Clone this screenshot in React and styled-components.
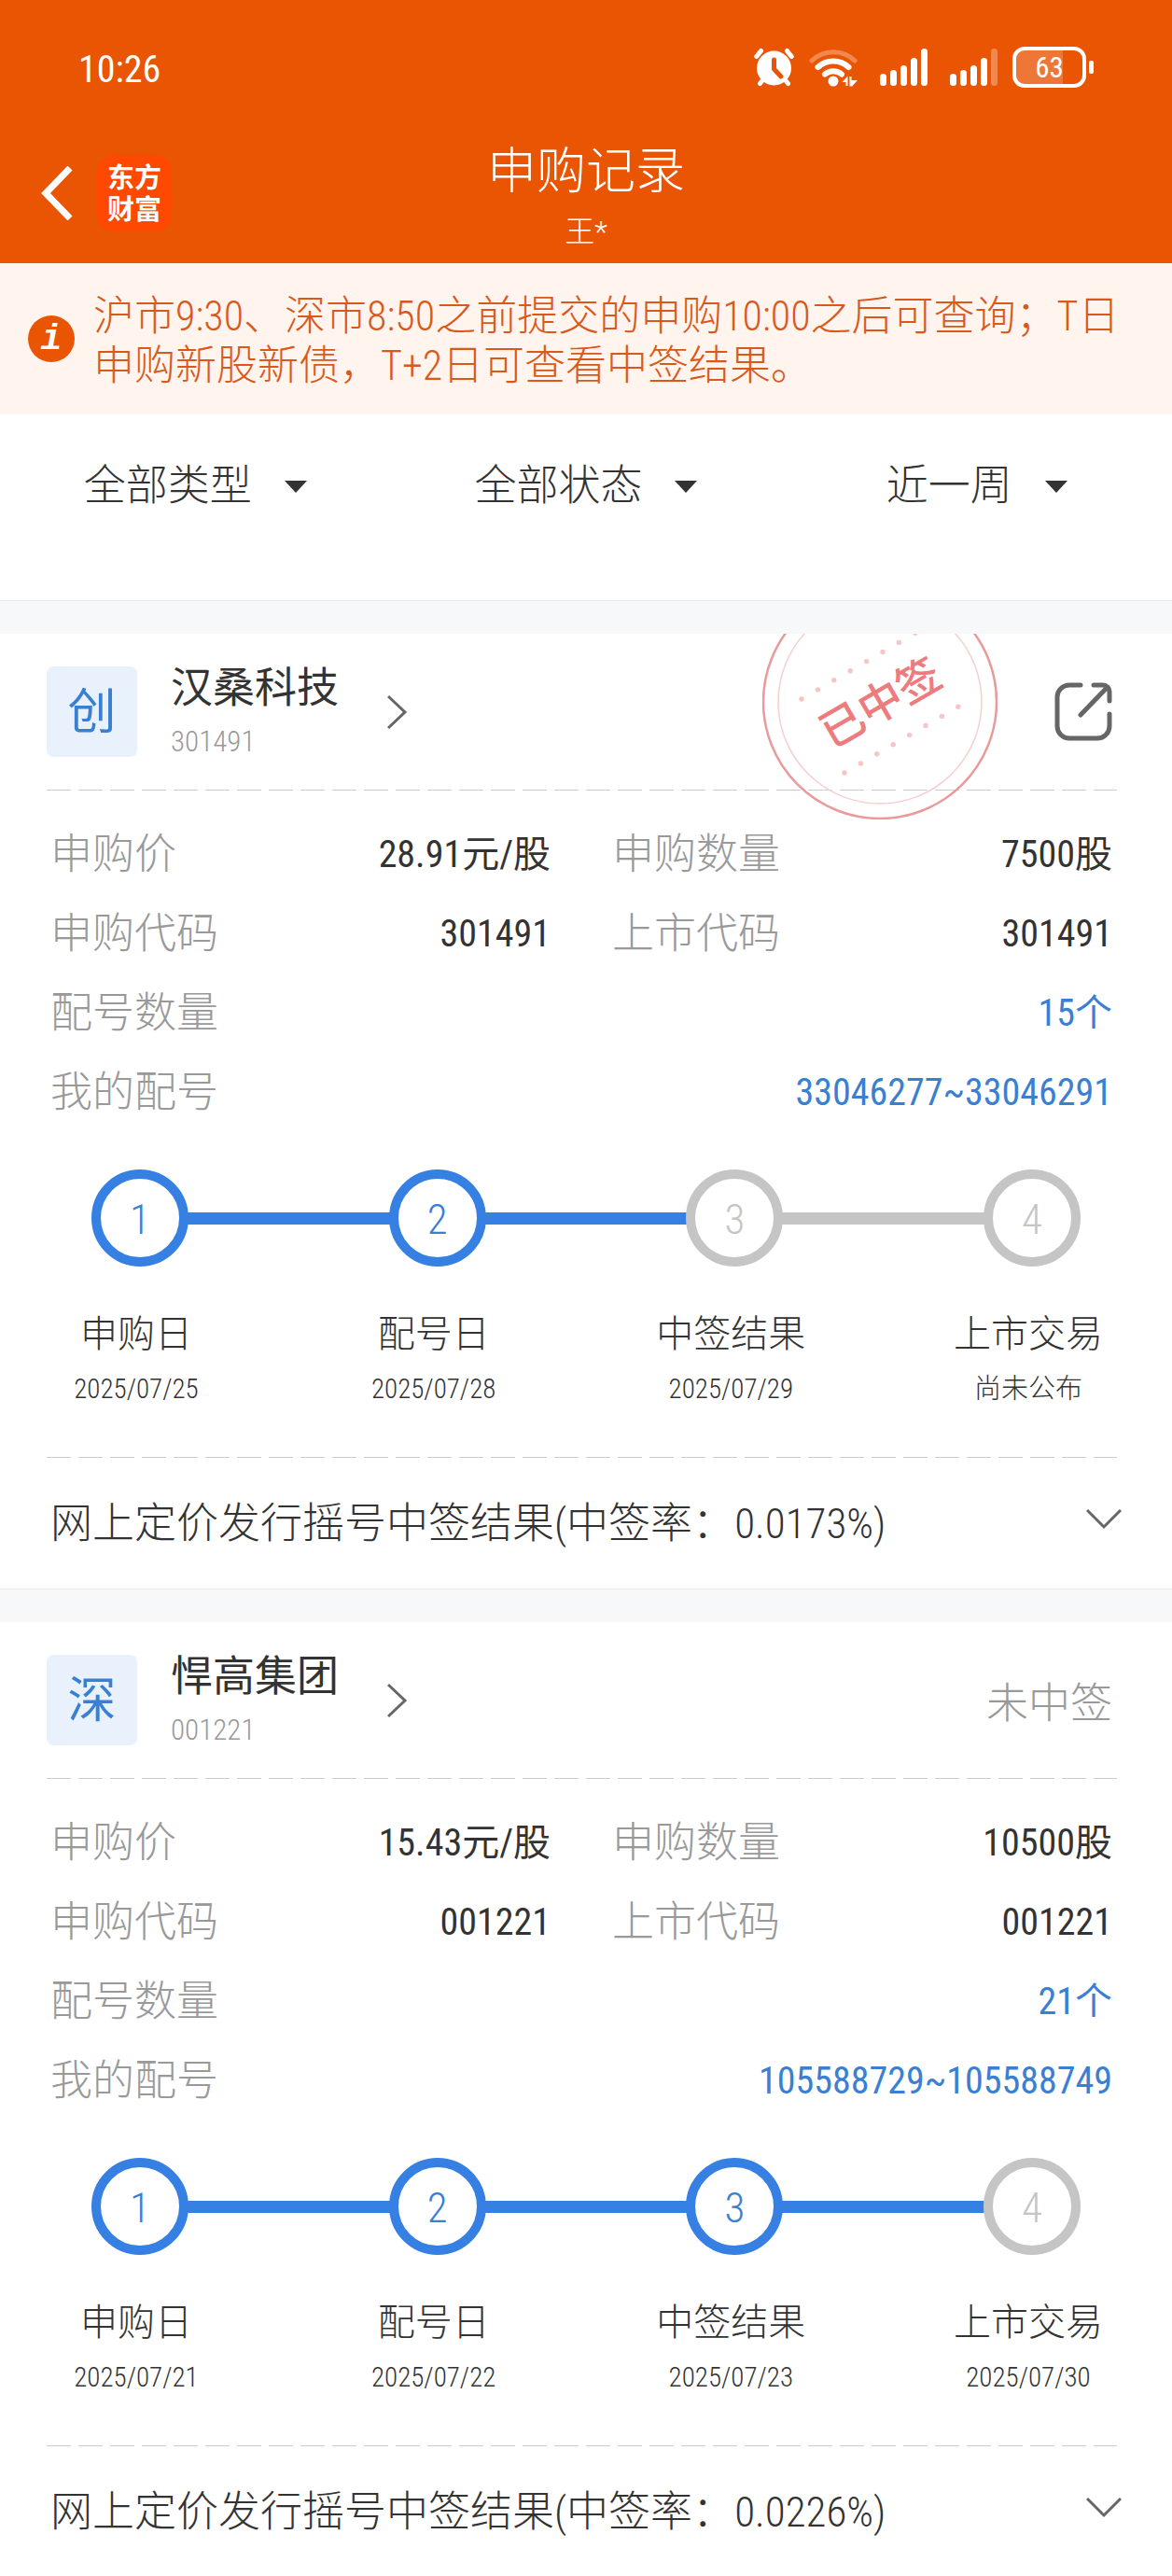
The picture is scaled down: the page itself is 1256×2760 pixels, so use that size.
import React from "react";
import styled, { createGlobalStyle, css } from "styled-components";

const FILTERS = [
  { name: "类型", options: ["全部类型", "新股申购", "新债申购"] },
  { name: "状态", options: ["全部状态", "已经中签", "没有中签"] },
  { name: "时间", options: ["近一周", "近一月", "近三月"] },
];

const RECORDS = [
  {
    market: "创",
    name: "汉桑科技",
    code: "301491",
    won: true,
    price: "28.91元/股",
    amount: "7500股",
    count: "15个",
    numbers: "33046277~33046291",
    done: 2,
    steps: [
      ["申购日", "2025/07/25"],
      ["配号日", "2025/07/28"],
      ["中签结果", "2025/07/29"],
      ["上市交易", "尚未公布"],
    ],
    rate: "0.0173%",
  },
  {
    market: "深",
    name: "悍高集团",
    code: "001221",
    won: false,
    price: "15.43元/股",
    amount: "10500股",
    count: "21个",
    numbers: "105588729~105588749",
    done: 3,
    steps: [
      ["申购日", "2025/07/21"],
      ["配号日", "2025/07/22"],
      ["中签结果", "2025/07/23"],
      ["上市交易", "2025/07/30"],
    ],
    rate: "0.0226%",
  },
];

const AlarmIcon = () => (
  <svg width="43" height="42" viewBox="0 0 43 42" fill="none" strokeLinecap="round">
    <circle cx="21.5" cy="22" r="18.5" fill="#fff" />
    <path d="M2.8 9.5L7.5 3.5M40.2 9.5L35.5 3.5M10 34L6.5 38.5M33 34L36.5 38.5" stroke="#fff" strokeWidth="5" />
    <path d="M21.5 13V23L29 31" stroke="#ea5504" strokeWidth="5" strokeLinejoin="round" />
  </svg>
);

const WifiIcon = () => (
  <svg width="52" height="42" viewBox="0 0 52 42" fill="none" stroke="#fff" strokeLinecap="round">
    <path d="M3 14A33 33 0 0 1 49 14" strokeWidth="5" opacity="0.3" />
    <path d="M9.5 21A24 24 0 0 1 42.5 21" strokeWidth="6" />
    <path d="M17 28.5A14 14 0 0 1 35 28.5" strokeWidth="6" />
    <circle cx="26" cy="36" r="5.5" fill="#fff" stroke="none" />
    <path d="M35.5 37L41.5 30.5V41H39.5V37ZM43.5 31H45.5V35H52L46 41.5H43.5Z" fill="#fff" stroke="none" />
  </svg>
);

const SignalIcon = ({ level }) => (
  <svg width="59" height="42" viewBox="-8 0 59 42" fill="#fff">
    {[28, 24, 19, 11, 1].map((top, idx) => (
      <rect
        key={top}
        x={idx * 11}
        y={top}
        width="7"
        height={41 - top}
        rx="3.5"
        opacity={idx < level ? 1 : 0.3}
      />
    ))}
  </svg>
);

const BackIcon = () => (
  <svg width="34" height="58" viewBox="0 0 34 58" fill="none" stroke="#fff" strokeWidth="7">
    <path d="M31 2L5 29L31 56" />
  </svg>
);

const RightIcon = () => (
  <svg width="22" height="38" viewBox="0 0 22 38" fill="none" stroke="#666" strokeWidth="3">
    <path d="M1 2L19 19L1 36" />
  </svg>
);

const DownIcon = () => (
  <svg width="38" height="22" viewBox="0 0 38 22" fill="none" stroke="#666" strokeWidth="3">
    <path d="M1 1L19 19L37 1" />
  </svg>
);

const ShareIcon = () => (
  <svg width="62" height="63" viewBox="0 0 62 63" fill="none" stroke="#666" strokeWidth="5" strokeLinecap="round">
    <path d="M28 3H16A13 13 0 0 0 3 16V47A13 13 0 0 0 16 60H46A13 13 0 0 0 59 47V34" />
    <path d="M42 3H52A7 7 0 0 1 59 10V20M56 6L28 35" />
  </svg>
);

const Stamp = () => (
  <StampSvg width="252" height="252" viewBox="0 0 252 252">
    <circle cx="126" cy="126" r="125" fill="none" stroke="#e99a9c" strokeWidth="2.5" />
    <circle cx="126" cy="126" r="109" fill="none" stroke="#f6d0d0" strokeWidth="1.5" />
    {[0, 1, 2, 3, 4, 5, 6, 7].map((n) => (
      <g key={n} fill="#f5c6c6">
        <circle cx={42 + n * 17.4} cy={123 - n * 10.1} r="2.7" />
        <circle cx={88 + n * 17.4} cy={202 - n * 10.1} r="2.7" />
      </g>
    ))}
    <text x="126" y="144" textAnchor="middle" transform="rotate(-30 126 126)">
      已中签
    </text>
  </StampSvg>
);

const Record = ({ record }) => {
  const { market, name, code, won, price, amount, count, numbers, done, steps, rate } = record;
  return (
    <Card>
      <CardHead>
        <Market>{market}</Market>
        <Stock href="#stock">
          <StockText>
            <StockName>{name}</StockName>
            <StockCode>{code}</StockCode>
          </StockText>
          <RightIcon />
        </Stock>
        {won ? (
          <IconButton aria-label="分享">
            <ShareIcon />
          </IconButton>
        ) : (
          <Missed>未中签</Missed>
        )}
      </CardHead>
      <Divider />
      <Fields>
        <Field>
          <dt>申购价</dt>
          <dd>{price}</dd>
        </Field>
        <Field>
          <dt>申购数量</dt>
          <dd>{amount}</dd>
        </Field>
        <Field>
          <dt>申购代码</dt>
          <dd>{code}</dd>
        </Field>
        <Field>
          <dt>上市代码</dt>
          <dd>{code}</dd>
        </Field>
        <Field $wide>
          <dt>配号数量</dt>
          <dd>
            <a href="#count">{count}</a>
          </dd>
        </Field>
        <Field $wide>
          <dt>我的配号</dt>
          <dd>
            <a href="#numbers">{numbers}</a>
          </dd>
        </Field>
      </Fields>
      <Track>
        {steps.map(([label], idx) => (
          <React.Fragment key={label}>
            {idx > 0 && <Bar $active={idx <= done} />}
            <Dot $active={idx < done}>{idx + 1}</Dot>
          </React.Fragment>
        ))}
      </Track>
      <Steps>
        {steps.map(([label, date]) => (
          <li key={label}>
            <StepName>{label}</StepName>
            <StepDate>{date}</StepDate>
          </li>
        ))}
      </Steps>
      <Divider />
      <Result>
        网上定价发行摇号中签结果(中签率：{rate})
        <DownIcon />
      </Result>
      {won && <Stamp />}
    </Card>
  );
};

const App = () => {
  return (
    <>
      <GlobalStyle />
      <Header>
        <StatusBar>
          <Time>10:26</Time>
          <StatusIcons>
            <AlarmIcon />
            <WifiIcon />
            <SignalIcon level={5} />
            <SignalIcon level={4} />
            <Battery>
              <Level>63</Level>
            </Battery>
          </StatusIcons>
        </StatusBar>
        <Nav>
          <NavLeft>
            <IconButton aria-label="返回">
              <BackIcon />
            </IconButton>
            <Logo>
              东方
              <br />
              财富
            </Logo>
          </NavLeft>
          <NavTitle>
            <h1>申购记录</h1>
            <p>王*</p>
          </NavTitle>
        </Nav>
      </Header>
      <Notice>
        <InfoMark>i</InfoMark>
        <p>
          沪市9:30、深市8:50之前提交的申购10:00之后可查询；T日申购新股新债，T+2日可查看中签结果。
        </p>
      </Notice>
      <Filters>
        {FILTERS.map(({ name, options }) => (
          <Filter key={name}>
            <select aria-label={name}>
              {options.map((option) => (
                <option key={option}>{option}</option>
              ))}
            </select>
            <svg width="24" height="13" viewBox="0 0 24 13" fill="#333">
              <path d="M0 0H24L12 13Z" />
            </svg>
          </Filter>
        ))}
      </Filters>
      <List>
        {RECORDS.map((record) => (
          <Record key={record.code} record={record} />
        ))}
      </List>
    </>
  );
};

export default App;

const flexBox = (justify, align) => css`
  display: flex;
  justify-content: ${justify};
  align-items: ${align};
`;

const GlobalStyle = createGlobalStyle`
  * {
    box-sizing: border-box;
    margin: 0;
    padding: 0;
  }

  body {
    background-color: #fff;
    color: #333;
    font-family: "Roboto Condensed", "Noto Sans CJK SC", sans-serif;
    font-size: 45px;
    font-weight: 300;
  }

  button, select {
    border: 0;
    background: none;
    color: inherit;
    font: inherit;
  }

  a {
    color: inherit;
    text-decoration: none;
  }

  ol {
    list-style: none;
  }

  svg {
    display: block;
    flex-shrink: 0;
  }
`;

const Header = styled.header`
  background-color: #ea5504;
  color: #fff;
`;

const StatusBar = styled.div`
  ${flexBox("space-between", "center")}
  height: 144px;
  padding: 0 84px;
`;

const Time = styled.span`
  padding-top: 4px;
  font-size: 40px;
  font-weight: 400;
`;

const StatusIcons = styled.div`
  ${flexBox("flex-end", "center")}
  gap: 16px;
`;

const Battery = styled.div`
  ${flexBox("flex-start", "center")}
  gap: 3px;

  &::after {
    content: "";
    width: 5px;
    height: 14px;
    border-radius: 2px;
    background-color: #fff;
  }
`;

const Level = styled.span`
  width: 79px;
  height: 44px;
  border: 4px solid #fff;
  border-radius: 13px;
  background: linear-gradient(90deg, #ee7738 70%, transparent 70%);
  font-size: 31px;
  font-weight: 400;
  line-height: 38px;
  text-align: center;
`;

const Nav = styled.nav`
  display: grid;
  grid-template-columns: 1fr auto 1fr;
  align-items: center;
  height: 138px;
  padding: 0 44px;
`;

const NavLeft = styled.div`
  ${flexBox("flex-start", "center")}
  gap: 26px;
  padding-bottom: 12px;
`;

const IconButton = styled.button`
  cursor: pointer;
`;

const Logo = styled.div`
  width: 80px;
  height: 82px;
  padding: 8px 0;
  border-radius: 18px;
  background-color: #ff4800;
  font-family: "Liberation Sans", "Noto Sans CJK SC", sans-serif;
  font-size: 29px;
  font-weight: 700;
  line-height: 34px;
  text-align: center;
`;

const NavTitle = styled.div`
  padding-top: 6px;
  line-height: 64px;
  text-align: center;

  h1 {
    font-size: 53px;
    font-weight: 300;
  }

  p {
    font-size: 32px;
  }
`;

const Notice = styled.section`
  ${flexBox("flex-start", "center")}
  gap: 20px;
  min-height: 162px;
  padding: 0 30px;
  background-color: #fff4ee;
  color: #d9591a;

  p {
    padding-top: 6px;
    font-size: 44px;
    line-height: 53px;
  }
`;

const InfoMark = styled.span`
  flex-shrink: 0;
  width: 50px;
  height: 50px;
  border-radius: 50%;
  background-color: #ea5504;
  color: #fff;
  font-family: "Liberation Mono", monospace;
  font-size: 38px;
  font-style: italic;
  font-weight: 700;
  line-height: 52px;
  text-align: center;
`;

const Filters = styled.section`
  display: grid;
  grid-template-columns: repeat(3, 1fr);
  height: 200px;
  padding-top: 44px;
  border-bottom: 1px solid #ececec;
`;

const Filter = styled.div`
  ${flexBox("center", "center")}
  gap: 34px;
  height: 66px;

  select {
    height: 66px;
    appearance: none;
    line-height: 66px;
  }
`;

const List = styled.main`
  display: flex;
  flex-direction: column;
  gap: 35px;
  padding-top: 35px;
  background-color: #f6f8fa;
`;

const Card = styled.article`
  position: relative;
  overflow: hidden;
  border-bottom: 1px solid #ececec;
  background-color: #fff;
`;

const CardHead = styled.div`
  ${flexBox("flex-start", "center")}
  height: 167px;
  padding: 0 64px 0 50px;
`;

const Market = styled.span`
  width: 97px;
  height: 97px;
  margin-right: 36px;
  border-radius: 7px;
  background-color: #e9f2fc;
  color: #3a80d2;
  font-size: 52px;
  font-weight: 400;
  line-height: 99px;
  text-align: center;
`;

const Stock = styled.a`
  ${flexBox("flex-start", "center")}
  gap: 52px;
  margin-right: auto;
`;

const StockText = styled.span`
  display: flex;
  flex-direction: column;
  padding-top: 4px;
`;

const StockName = styled.strong`
  font-weight: 400;
  line-height: 60px;
`;

const StockCode = styled.span`
  color: #999;
  font-size: 31px;
  line-height: 54px;
`;

const Missed = styled.span`
  color: #999;
`;

const StampSvg = styled.svg`
  position: absolute;
  top: -53px;
  right: 187px;
  pointer-events: none;

  text {
    fill: #ec7c7e;
    font-size: 47px;
    font-weight: 500;
  }
`;

const Divider = styled.div`
  height: 1px;
  margin: 0 59px 0 50px;
  background: repeating-linear-gradient(90deg, #ccc 0 26px, transparent 26px 34px);
`;

const Fields = styled.dl`
  display: grid;
  grid-template-columns: 1fr 1fr;
  column-gap: 66px;
  padding: 26px 64px 40px 54px;
`;

const Field = styled.div`
  ${flexBox("space-between", "center")}
  grid-column: ${({ $wide }) => ($wide ? "1 / -1" : "auto")};
  line-height: 85px;

  dt {
    color: #999;
  }

  dd {
    font-size: 40px;
    font-weight: 400;
  }

  a {
    color: #3a80d2;
  }
`;

const Track = styled.div`
  ${flexBox("flex-start", "center")}
  padding: 0 98px;
`;

const Dot = styled.span`
  width: 104px;
  height: 104px;
  border: 10px solid ${({ $active }) => ($active ? "#3580e2" : "#c5c5c5")};
  border-radius: 50%;
  color: ${({ $active }) => ($active ? "#3a80d2" : "#c5c5c5")};
  font-size: 45px;
  line-height: 88px;
  text-align: center;
`;

const Bar = styled.span`
  flex: 1;
  height: 13px;
  margin: 0 -2px;
  background-color: ${({ $active }) => ($active ? "#3580e2" : "#c5c5c5")};
`;

const Steps = styled.ol`
  ${flexBox("space-between", "flex-start")}
  padding: 44px 54px 44px 46px;
  line-height: 58px;

  li {
    width: 200px;
    text-align: center;
  }
`;

const StepName = styled.p`
  font-size: 40px;
`;

const StepDate = styled.p`
  font-size: 29px;
`;

const Result = styled.button`
  ${flexBox("space-between", "center")}
  width: 100%;
  height: 140px;
  padding: 0 54px 8px;
  font-size: 45px;
  text-align: left;
  cursor: pointer;
`;
